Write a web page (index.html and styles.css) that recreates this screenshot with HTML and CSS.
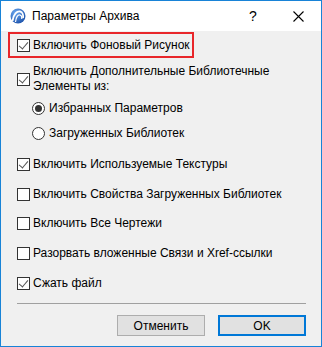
FILE: index.html
```html
<!DOCTYPE html>
<html lang="ru">
<head>
<meta charset="UTF-8">
<title>Параметры Архива</title>
<link rel="stylesheet" href="styles.css">
</head>
<body>
<div class="window">
    <div class="titlebar">
        <svg class="app-icon" width="16" height="16" viewBox="0 0 16 16">
            <defs>
                <radialGradient id="g" cx="0.35" cy="0.3" r="0.8">
                    <stop offset="0" stop-color="#6aa8f0"/>
                    <stop offset="1" stop-color="#1a4fa8"/>
                </radialGradient>
            </defs>
            <circle cx="8" cy="8" r="7.5" fill="url(#g)"/>
            <path d="M2.5 13 C3.5 6 7 3 10 3.5 C12.5 4 13.5 7 13 10" fill="none" stroke="#fff" stroke-width="1.8"/>
            <path d="M5.5 14 C6 9 8 6.5 10 7 C11.5 7.5 12 9 11.8 11" fill="none" stroke="#fff" stroke-width="1.2"/>
        </svg>
        <span class="title">Параметры Архива</span>
        <span class="help">?</span>
        <svg class="close" width="11" height="11" viewBox="0 0 11 11">
            <path d="M0.5 0.5 L10.5 10.5 M10.5 0.5 L0.5 10.5" stroke="#000" stroke-width="1.1"/>
        </svg>
    </div>
    <div class="content">
        <div class="highlight">
            <label class="row"><span class="check checked"></span>Включить Фоновый Рисунок</label>
        </div>
        <label class="row multi"><span class="check checked"></span><span>Включить Дополнительные Библиотечные<br>Элементы из:</span></label>
        <label class="row radio-row first"><span class="radio on"></span>Избранных Параметров</label>
        <label class="row radio-row"><span class="radio"></span>Загруженных Библиотек</label>
        <label class="row after-radio"><span class="check checked"></span>Включить Используемые Текстуры</label>
        <label class="row"><span class="check"></span>Включить Свойства Загруженных Библиотек</label>
        <label class="row tight"><span class="check"></span>Включить Все Чертежи</label>
        <label class="row"><span class="check"></span>Разорвать вложенные Связи и Xref-ссылки</label>
        <label class="row"><span class="check checked"></span>Сжать файл</label>
        <div class="separator"></div>
        <div class="buttons">
            <button class="btn">Отменить</button>
            <button class="btn default">OK</button>
        </div>
    </div>
</div>
</body>
</html>
```
FILE: styles.css
```css
* {
    margin: 0;
    padding: 0;
    box-sizing: border-box;
}

body {
    width: 322px;
    height: 347px;
    font-family: "Liberation Sans", "Noto Sans", sans-serif;
    font-size: 12px;
    color: #000;
}

.window {
    width: 322px;
    height: 347px;
    border: 1px solid #1883d7;
    background: #f0f0f0;
    display: flex;
    flex-direction: column;
}

.titlebar {
    height: 30px;
    background: #fff;
    display: flex;
    align-items: center;
    padding-left: 9px;
}

.app-icon {
    margin-right: 6px;
}

.title {
    font-size: 12px;
    flex: 1;
}

.help {
    font-size: 14px;
    width: 14px;
    margin-right: 30px;
}

.close {
    margin-right: 17px;
}

.content {
    padding: 1px 15px 0 7px;
}

.highlight {
    border: 2px solid #e8262a;
    width: 186px;
    height: 26px;
    padding-left: 7px;
    display: flex;
    align-items: center;
}

.row {
    display: flex;
    align-items: center;
    height: 14px;
    margin-left: 9px;
    margin-top: 16px;
    white-space: nowrap;
}

.highlight .row {
    margin: 0;
}

.row.multi {
    height: 30px;
    margin-top: 6px;
    line-height: 15px;
}

.radio-row {
    margin-left: 24px;
    margin-top: 11px;
}

.radio-row.first {
    margin-top: 7px;
}

.row.after-radio {
    margin-top: 17px;
}

.row.tight {
    margin-top: 15px;
}

.check {
    width: 13px;
    height: 13px;
    border: 1px solid #333;
    background: #fff;
    margin-right: 3px;
    position: relative;
    flex: none;
}

.check.checked::after {
    content: "";
    position: absolute;
    left: 3px;
    top: 0px;
    width: 4px;
    height: 8px;
    border-right: 1.5px solid #555;
    border-bottom: 1.5px solid #555;
    transform: rotate(40deg);
}

.radio {
    width: 13px;
    height: 13px;
    border: 1px solid #333;
    border-radius: 50%;
    background: #fff;
    margin-right: 4px;
    display: flex;
    align-items: center;
    justify-content: center;
    flex: none;
}

.radio.on::after {
    content: "";
    width: 7px;
    height: 7px;
    border-radius: 50%;
    background: #333;
}

.separator {
    margin: 13px 0 0 9px;
    height: 1px;
    background: #a0a0a0;
}

.buttons {
    display: flex;
    justify-content: flex-end;
    gap: 13px;
    margin-top: 11px;
}

.btn {
    width: 88px;
    height: 21px;
    border: 1px solid #adadad;
    background: #e1e1e1;
    font-family: inherit;
    font-size: 12px;
    color: #000;
}

.btn.default {
    border: 2px solid #0078d7;
}
```
